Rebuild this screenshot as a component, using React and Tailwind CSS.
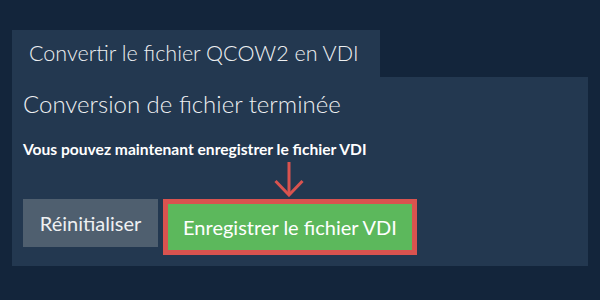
import React from "react";

export default function App() {
  return (
    <div className="w-[600px] h-[300px] bg-[#13253b] pt-[30px] px-[12px] font-['Lato','Liberation_Sans',sans-serif] text-white">
      {/* tab */}
      <div className="w-[368px] h-[47px] bg-[#233850] flex items-center pl-[17px] text-[21.5px] font-light text-[#eef0f2]">
        Convertir le fichier QCOW2 en VDI
      </div>
      {/* panel */}
      <div className="h-[189px] bg-[#233850] px-[11px] pt-[11px]">
        <h2 className="text-[24px] font-light leading-[32px] text-[#eef0f2]">Conversion de fichier terminée</h2>
        <p className="mt-[19px] text-[15.6px] font-bold leading-[20px] text-white">
          Vous pouvez maintenant enregistrer le fichier VDI
        </p>
        <div className="mt-[40px] flex items-start gap-[5px]">
          <button className="w-[135px] h-[48px] bg-[#4f5f6f] text-[20px] text-[#eef0f2]">Réinitialiser</button>
          <div className="relative">
            <svg
              className="absolute left-[111px] top-[-38px]"
              width="30"
              height="36"
              viewBox="0 0 30 36"
              fill="none"
              stroke="#d9534f"
              strokeWidth="3"
            >
              <path d="M15 1 V34" />
              <path d="M1.5 20 L15 34 L28.5 20" />
            </svg>
            <button className="w-[254px] h-[56px] bg-[#5cb85c] border-[5px] border-[#d9534f] text-[20px] text-white">
              Enregistrer le fichier VDI
            </button>
          </div>
        </div>
      </div>
    </div>
  );
}
